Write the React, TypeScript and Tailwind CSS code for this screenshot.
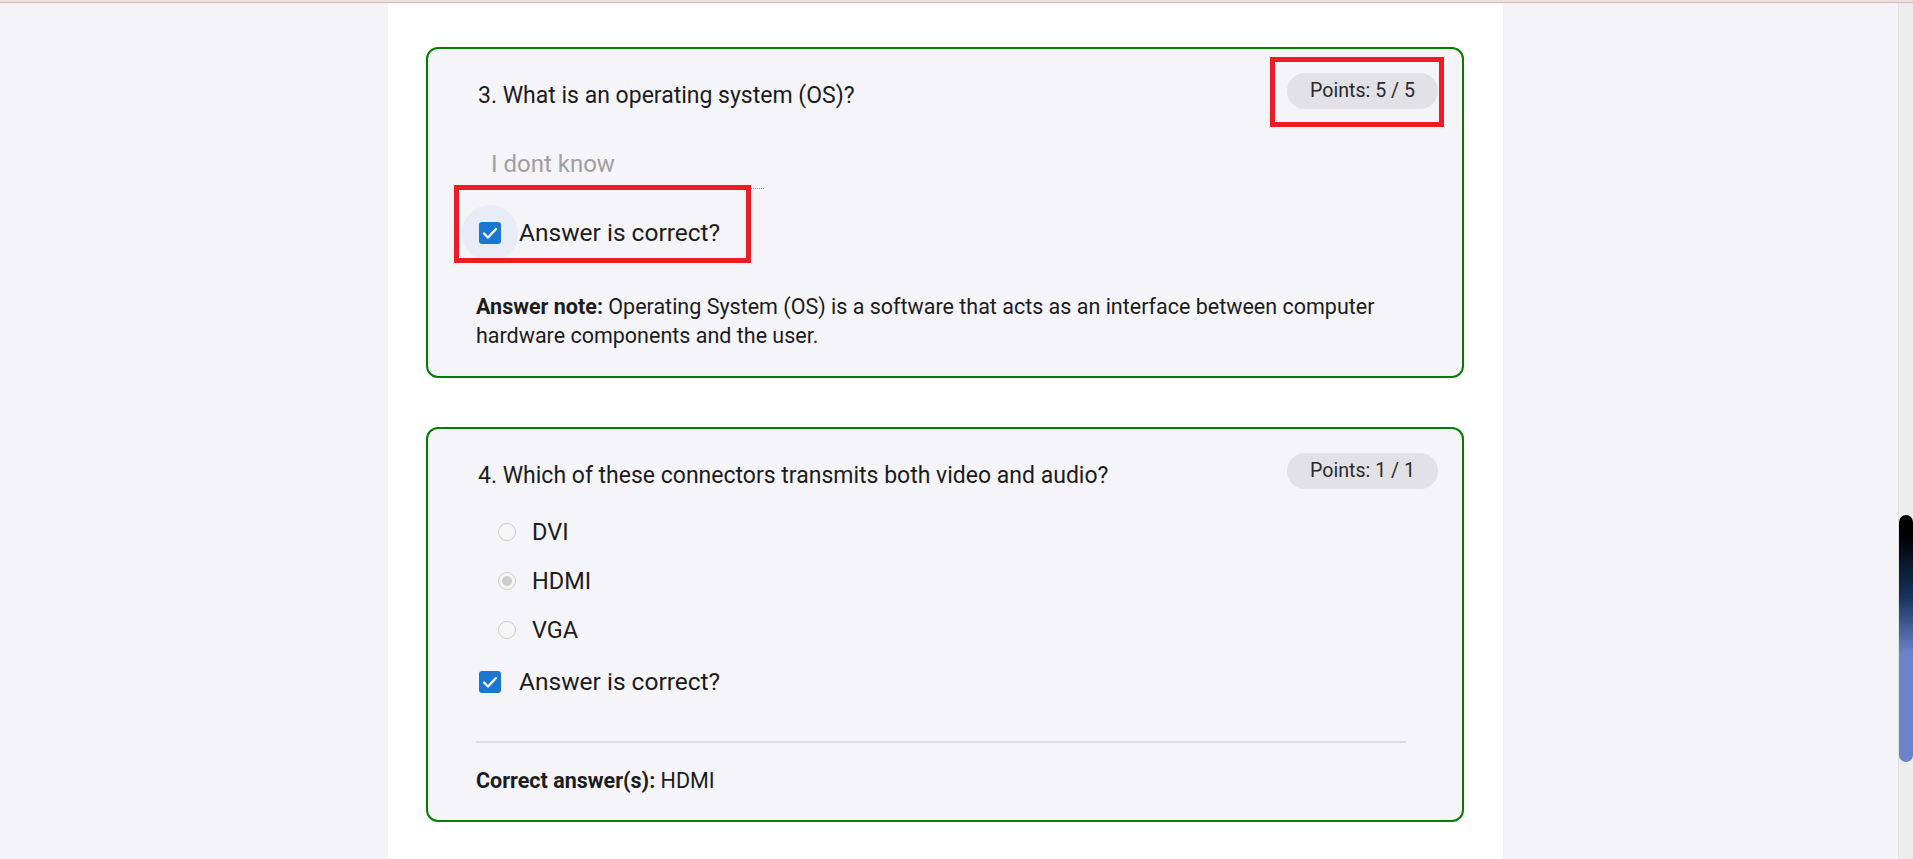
import React from 'react';

const Check = () => (
  <span className="w-[22px] h-[22px] rounded-[3px] bg-[#1976d2] flex items-center justify-center">
    <svg width="22" height="22" viewBox="0 0 22 22" fill="none">
      <polyline points="5,11.5 9,15.5 17,7" stroke="white" strokeWidth="2.4" strokeLinecap="round" strokeLinejoin="round" />
    </svg>
  </span>
);

const CorrectRow = ({ halo }: { halo?: boolean }) => (
  <div className="flex items-center h-[56px]">
    <div className={`w-[56px] h-[56px] -ml-[14px] rounded-full flex items-center justify-center ${halo ? 'bg-[#e7ecf6]' : ''}`}>
      <Check />
    </div>
    <span className="ml-[1px] text-[24.5px] leading-[34px] text-[#1c1c1c]">Answer is correct?</span>
  </div>
);

const Radio = ({ label, selected }: { label: string; selected?: boolean }) => (
  <div className="flex items-center h-[49px] pl-[22px]">
    <span className="w-[18px] h-[18px] rounded-full border border-[#cfcfcf] bg-[#f6f6f6] flex items-center justify-center">
      {selected && <span className="w-[10px] h-[10px] rounded-full bg-[#cdcdcd]" />}
    </span>
    <span className="ml-[16px] text-[23.5px] leading-[34px] text-[#1c1c1c]">{label}</span>
  </div>
);

const Pill = ({ children }: { children: React.ReactNode }) => (
  <div className="h-[36px] px-[23px] rounded-full bg-[#e1e1e6] text-[19.6px] leading-[36px] text-[#2a2a2a] whitespace-nowrap">
    {children}
  </div>
);

export default function App() {
  return (
    <div
      className="h-[859px] w-full flex flex-col overflow-hidden bg-[#f3f3f8]"
      style={{ fontFamily: 'Roboto, "Noto Sans", sans-serif' }}
    >
      <div className="h-[3px] bg-[#efdfdc] border-b border-[#d9bcb7]" />
      <div className="flex flex-1 min-h-0">
        <div className="flex-1 flex justify-center pr-[8px]">
          <div className="w-[1115px] bg-white pt-[44px] flex flex-col items-center gap-[49px]">
            {/* question 3 */}
            <div className="relative w-[1038px] border-2 border-[#008000] rounded-[12px] bg-[#f4f4f9] pt-[24px] pb-[26px] pl-[48px] pr-[24px]">
              <div className="flex justify-between items-start">
                <div className="mt-[6px] ml-[2px] text-[23px] leading-[34px] text-[#1c1c1c]">3. What is an operating system (OS)?</div>
                <Pill>Points: 5 / 5</Pill>
              </div>
              <div className="mt-[34px] w-[288px] pl-[15px] pb-[7px] border-b border-dotted border-[#9c9c9c] text-[24px] leading-[34px] text-[#a0a0a0]">
                I dont know
              </div>
              <div className="mt-[16px]">
                <CorrectRow halo />
              </div>
              <p className="mt-[31px] pr-[32px] text-[21.5px] leading-[29px] text-[#1c1c1c]">
                <b className="font-bold">Answer note:</b> Operating System (OS) is a software that acts as an interface between computer hardware components and the user.
              </p>
              <div className="absolute left-[842px] top-[8px] w-[174px] h-[70px] border-[5px] border-[#ec1c24]" />
              <div className="absolute left-[26px] top-[136px] w-[297px] h-[78px] border-[5px] border-[#ec1c24]" />
            </div>

            {/* question 4 */}
            <div className="relative w-[1038px] border-2 border-[#008000] rounded-[12px] bg-[#f4f4f9] pt-[24px] pb-[25px] pl-[48px] pr-[24px]">
              <div className="flex justify-between items-start">
                <div className="mt-[6px] ml-[2px] text-[23px] leading-[34px] text-[#1c1c1c]">4. Which of these connectors transmits both video and audio?</div>
                <Pill>Points: 1 / 1</Pill>
              </div>
              <div className="mt-[14px] flex flex-col">
                <Radio label="DVI" />
                <Radio label="HDMI" selected />
                <Radio label="VGA" />
              </div>
              <CorrectRow />
              <div className="mt-[31px] mr-[32px] h-[2px] bg-[#dcdce1]" />
              <p className="mt-[23px] text-[21.5px] leading-[29px] text-[#1c1c1c]">
                <b className="font-bold">Correct answer(s):</b> HDMI
              </p>
            </div>
          </div>
        </div>
        <div className="w-[15px] bg-[#ededed] border-l border-[#e2e2e2] pt-[512px]">
          <div className="h-[247px] w-[14px] rounded-full bg-[linear-gradient(to_bottom,#000_8%,#15335c_33%,#6a83c9_56%,#6a83c9_100%)]" />
        </div>
      </div>
    </div>
  );
}
